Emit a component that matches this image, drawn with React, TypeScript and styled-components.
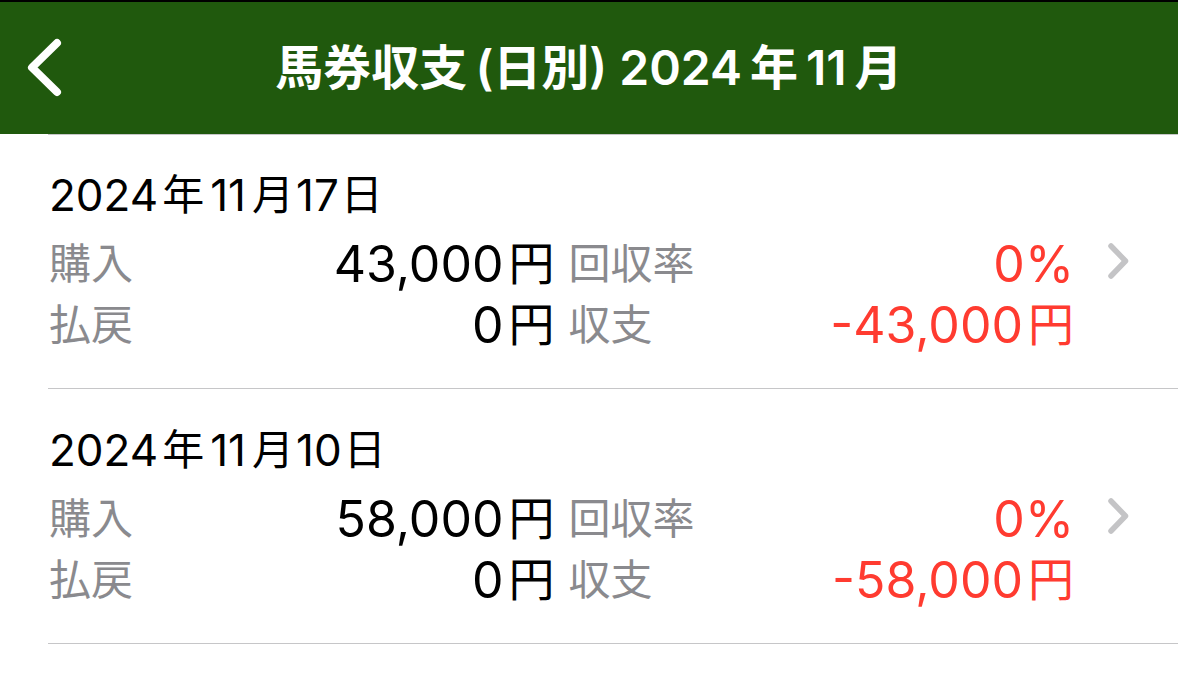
import React from 'react';
import styled, { createGlobalStyle } from 'styled-components';

const GlobalStyle = createGlobalStyle`
  * { box-sizing: border-box; }
  body {
    margin: 0;
    background: #fff;
    color: #000;
    font-family: Inter, "Noto Sans CJK JP", sans-serif;
  }
`;

const Header = styled.header`
  display: grid;
  grid-template-columns: 96px 1fr 96px;
  align-items: center;
  height: 134px;
  border-top: 2px solid #000;
  background: #20590d;
  color: #fff;
`;

const BackButton = styled.button`
  display: flex;
  align-items: center;
  height: 100%;
  padding: 0 0 0 24px;
  border: 0;
  background: none;
  color: inherit;
  cursor: pointer;
`;

const Title = styled.h1`
  margin: 0;
  font-size: 48px;
  line-height: 64px;
  font-weight: 600;
  text-align: center;
  white-space: nowrap;
`;

const Spaced = styled.span<{ $before?: number; $after?: number }>`
  margin-left: ${(p) => p.$before ?? 0}px;
  margin-right: ${(p) => p.$after ?? 0}px;
`;

const DayLink = styled.a`
  display: block;
  padding: 32px 48px 32px 1px;
  color: inherit;
  text-decoration: none;
`;

const List = styled.ul`
  margin: 0;
  padding: 0 0 0 48px;
  list-style: none;
`;

const Item = styled.li`
  border-bottom: 1px solid #c6c6c8;

  &:first-child {
    border-top: 1px solid #c6c6c8;
  }

  &:first-child ${DayLink} {
    padding-top: 31px;
  }
`;

const DayDate = styled.h2`
  margin: 0 0 10px;
  font-size: 44px;
  line-height: 58px;
  font-weight: 400;
`;

const Kanji = styled(Spaced)`
  font-size: 42px;
  line-height: 1;
  vertical-align: 1px;
`;

const Details = styled.div`
  display: flex;
  gap: 32px;
`;

const Figures = styled.dl`
  flex: 1;
  display: grid;
  grid-template-columns: 1fr 1fr;
  column-gap: 14px;
  margin: 0;
`;

const Figure = styled.div`
  display: flex;
  justify-content: space-between;
  align-items: center;
  height: 61px;
  white-space: nowrap;
`;

const Label = styled.dt`
  padding-bottom: 2px;
  color: #8a8a8e;
  font-size: 42px;
  line-height: 59px;
`;

const Value = styled.dd<{ $negative?: boolean }>`
  margin: 0;
  color: ${(p) => (p.$negative ? '#ff3b30' : '#000')};
  font-size: 50px;
  line-height: 61px;
`;

const Unit = styled.span`
  margin-left: 5px;
  font-size: 46px;
  line-height: 1;
  vertical-align: 2px;
`;

const Disclosure = styled.svg`
  flex: none;
  margin-top: 8px;
`;

type Day = {
  year: string;
  month: string;
  date: string;
  bought: string;
  paid: string;
  rate: string;
  balance: string;
};

const days: Day[] = [
  { year: '2024', month: '11', date: '17', bought: '43,000', paid: '0', rate: '0%', balance: '-43,000' },
  { year: '2024', month: '11', date: '10', bought: '58,000', paid: '0', rate: '0%', balance: '-58,000' },
];

function DayRow({ day }: { day: Day }) {
  return (
    <Item>
      <DayLink href="#">
        <DayDate>
          {day.year}
          <Kanji $before={4} $after={6}>年</Kanji>
          {day.month}
          <Kanji $before={6} $after={2}>月</Kanji>
          {day.date}
          <Kanji $before={2}>日</Kanji>
        </DayDate>
        <Details>
          <Figures>
            <Figure>
              <Label>購入</Label>
              <Value>{day.bought}<Unit>円</Unit></Value>
            </Figure>
            <Figure>
              <Label>回収率</Label>
              <Value $negative>{day.rate}</Value>
            </Figure>
            <Figure>
              <Label>払戻</Label>
              <Value>{day.paid}<Unit>円</Unit></Value>
            </Figure>
            <Figure>
              <Label>収支</Label>
              <Value $negative>{day.balance}<Unit>円</Unit></Value>
            </Figure>
          </Figures>
          <Disclosure width="24" height="40" viewBox="0 0 24 40" fill="none" aria-hidden="true">
            <path d="M5 4 L19.5 19 L5 34" stroke="#c4c4c6" strokeWidth="5.5" strokeLinecap="round" strokeLinejoin="round" />
          </Disclosure>
        </Details>
      </DayLink>
    </Item>
  );
}

export default function App() {
  return (
    <>
      <GlobalStyle />
      <Header>
        <BackButton type="button" aria-label="戻る">
          <svg width="40" height="60" viewBox="0 0 40 60" fill="none" aria-hidden="true">
            <path d="M33 5 L8 29.5 L33 54" stroke="#fff" strokeWidth="8" strokeLinecap="round" strokeLinejoin="round" />
          </svg>
        </BackButton>
        <Title>
          馬券収支<Spaced $before={8}>(日別)</Spaced> 2024<Spaced $before={8} $after={8}>年</Spaced>11<Spaced $before={8}>月</Spaced>
        </Title>
      </Header>
      <main>
        <List>
          {days.map((day) => (
            <DayRow key={day.year + day.month + day.date} day={day} />
          ))}
        </List>
      </main>
    </>
  );
}
